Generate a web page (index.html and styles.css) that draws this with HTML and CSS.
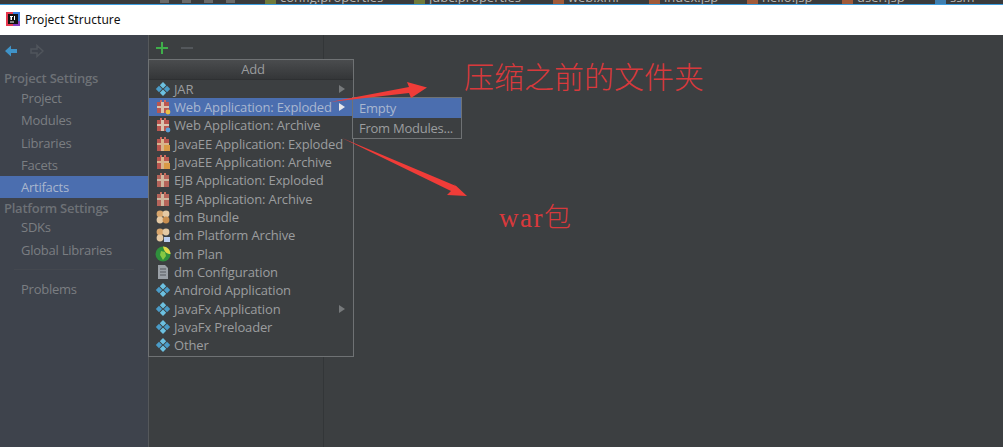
FILE: index.html
```html
<!DOCTYPE html>
<html lang="en">
<head>
    <meta charset="UTF-8">
    <meta name="viewport" content="width=device-width, initial-scale=1.0">
    <title>Project Structure</title>
    <link rel="stylesheet" href="styles.css">
</head>
<body>
    <svg width="0" height="0" class="defs">
        <defs>
            <symbol id="diamond" viewBox="0 0 16 16">
                <path d="M8 1l3.200 3.200L8 7.400 4.800 4.200z" fill="#6cc0e0"/>
                <path d="M4 4.800L7.200 8 4 11.200.8 8z" fill="#4a9cc8"/>
                <path d="M12 4.800L15.200 8 12 11.200 8.800 8z" fill="#4a9cc8"/>
                <path d="M8 8.600l3.200 3.200L8 15l-3.200-3.200z" fill="#6cc0e0"/>
            </symbol>
            <symbol id="gift" viewBox="0 0 16 16">
                <path d="M2 3h12v11H2z" fill="#d9c3ae"/>
                <path d="M2 3h4v4H2zM9 3h5v4H9zM2 9h4v5H2zM9 9h5v5H9z" fill="#b9564f"/>
                <path d="M5 1h2v2H5zM9 1h2v2H9z" fill="#cf6a5e"/>
                <circle cx="13" cy="13" r="2.400" fill="#e8c04a"/>
            </symbol>
            <symbol id="gift-blue" viewBox="0 0 16 16">
                <path d="M2 3h12v11H2z" fill="#d9c3ae"/>
                <path d="M2 3h4v4H2zM9 3h5v4H9zM2 9h4v5H2zM9 9h5v5H9z" fill="#b9564f"/>
                <path d="M5 1h2v2H5zM9 1h2v2H9z" fill="#cf6a5e"/>
                <circle cx="13" cy="13" r="2.400" fill="#5a9fd8"/>
            </symbol>
            <symbol id="gift-jar" viewBox="0 0 16 16">
                <path d="M2 3h12v12H2z" fill="#d8b48c"/>
                <path d="M2 3h4v4H2zM9 3h5v4H9zM2 9h4v6H2z" fill="#b9564f"/>
                <path d="M5 1h2v2H5zM9 1h2v2H9z" fill="#cf6a5e"/>
                <path d="M9 9h6v6H9z" fill="#d99a45"/>
            </symbol>
            <symbol id="gift-ejb" viewBox="0 0 16 16">
                <path d="M2 3h12v12H2z" fill="#cfb79f"/>
                <path d="M2 3h4v4H2zM9 3h5v4H9zM2 9h4v6H2zM9 9h5v6H9z" fill="#b5645a"/>
                <path d="M5 1h2v2H5zM9 1h2v2H9z" fill="#c9705f"/>
            </symbol>
            <symbol id="bundle" viewBox="0 0 16 16">
                <circle cx="5" cy="5" r="3.400" fill="#d8a66c"/>
                <circle cx="11" cy="5" r="3.400" fill="#e4c9a4"/>
                <circle cx="5" cy="11" r="3.400" fill="#e4c9a4"/>
                <circle cx="11" cy="11" r="3.400" fill="#c98f50"/>
            </symbol>
            <symbol id="bundle-lock" viewBox="0 0 16 16">
                <circle cx="5" cy="5" r="3.400" fill="#d8a66c"/>
                <circle cx="11" cy="5" r="3.400" fill="#e4c9a4"/>
                <circle cx="5" cy="11" r="3.400" fill="#e4c9a4"/>
                <path d="M9 10h6v5H9z" fill="#b9cdf0"/>
            </symbol>
            <symbol id="globe" viewBox="0 0 16 16">
                <circle cx="8" cy="8" r="7.500" fill="#2f8f3c"/>
                <path d="M8 .5C12 .5 15.500 4 15.500 8c-3 0-6-1-7.500-7.500z" fill="#e2d84a"/>
                <path d="M6 5l4 1 1 4-3 4-3-5z" fill="#86c843"/>
            </symbol>
            <symbol id="doc" viewBox="0 0 16 16">
                <path d="M3 1h7l3 3v11H3z" fill="#9aa0a6"/>
                <path d="M5 5h6M5 8h6M5 11h6" stroke="#55595e" stroke-width="1.200"/>
            </symbol>
        </defs>
    </svg>

    <div class="ide-strip">
        <span class="strip-tools"></span>
        <span class="strip-tab tab-config">config.properties</span>
        <span class="strip-tab tab-jdbc">jdbc.properties</span>
        <span class="strip-tab tab-web">web.xml</span>
        <span class="strip-tab tab-index">index.jsp</span>
        <span class="strip-tab tab-hello">hello.jsp</span>
        <span class="strip-tab tab-user">user.jsp</span>
        <span class="strip-tab tab-ssm">ssm</span>
    </div>

    <header class="titlebar">
        <svg class="app-logo" width="16" height="16" viewBox="0 0 16 16">
            <path d="M1 1h8v14H1z" fill="#e8384f"/>
            <path d="M8 1h7v9H8z" fill="#3b7de0"/>
            <path d="M8 10h7v5H8z" fill="#8a3fc0"/>
            <path d="M3 3h10v10H3z" fill="#111"/>
            <path d="M5 10.500h4v1H5z" fill="#fff"/>
            <path d="M5 5h3v1H7v3H5.500V6H5zM9 5h1v4H9z" fill="#fff"/>
        </svg>
        <span class="title-text">Project Structure</span>
    </header>

    <main class="window">
        <aside class="sidebar">
            <div class="nav-arrows">
                <svg width="14" height="14" viewBox="0 0 14 14"><path d="M1 7l6-5.500v3.500h6v4H7v3.500z" fill="#3f93c8"/></svg>
                <svg width="14" height="14" viewBox="0 0 14 14"><path d="M13 7L7 1.500v3.500H1v4h6v3.500z" fill="none" stroke="#50555c" stroke-width="1.500"/></svg>
            </div>
            <div class="nav-group">Project Settings</div>
            <div class="nav-item">Project</div>
            <div class="nav-item">Modules</div>
            <div class="nav-item">Libraries</div>
            <div class="nav-item">Facets</div>
            <div class="nav-item selected">Artifacts</div>
            <div class="nav-group group-platform">Platform Settings</div>
            <div class="nav-item">SDKs</div>
            <div class="nav-item">Global Libraries</div>
            <div class="nav-sep"></div>
            <div class="nav-item">Problems</div>
        </aside>

        <section class="artifacts">
            <div class="toolbar">
                <svg width="14" height="14" viewBox="0 0 14 14"><path d="M7 1v12M1 7h12" stroke="#3fae4a" stroke-width="2"/></svg>
                <svg width="14" height="14" viewBox="0 0 14 14"><path d="M1 7h12" stroke="#53575b" stroke-width="2"/></svg>
            </div>
        </section>

        <section class="content"></section>
    </main>

    <div class="popup add-menu">
        <div class="popup-head">Add</div>
        <div class="menu-row"><svg class="ico"><use href="#diamond"/></svg><span>JAR</span><i class="caret"></i></div>
        <div class="menu-row active"><svg class="ico"><use href="#gift"/></svg><span>Web Application: Exploded</span><i class="caret"></i></div>
        <div class="menu-row"><svg class="ico"><use href="#gift-blue"/></svg><span>Web Application: Archive</span></div>
        <div class="menu-row"><svg class="ico"><use href="#gift-jar"/></svg><span>JavaEE Application: Exploded</span></div>
        <div class="menu-row"><svg class="ico"><use href="#gift-jar"/></svg><span>JavaEE Application: Archive</span></div>
        <div class="menu-row"><svg class="ico"><use href="#gift-ejb"/></svg><span>EJB Application: Exploded</span></div>
        <div class="menu-row"><svg class="ico"><use href="#gift-ejb"/></svg><span>EJB Application: Archive</span></div>
        <div class="menu-row"><svg class="ico"><use href="#bundle"/></svg><span>dm Bundle</span></div>
        <div class="menu-row"><svg class="ico"><use href="#bundle-lock"/></svg><span>dm Platform Archive</span></div>
        <div class="menu-row"><svg class="ico"><use href="#globe"/></svg><span>dm Plan</span></div>
        <div class="menu-row"><svg class="ico"><use href="#doc"/></svg><span>dm Configuration</span></div>
        <div class="menu-row"><svg class="ico"><use href="#diamond"/></svg><span>Android Application</span></div>
        <div class="menu-row"><svg class="ico"><use href="#diamond"/></svg><span>JavaFx Application</span><i class="caret"></i></div>
        <div class="menu-row"><svg class="ico"><use href="#diamond"/></svg><span>JavaFx Preloader</span></div>
        <div class="menu-row"><svg class="ico"><use href="#diamond"/></svg><span>Other</span></div>
    </div>

    <div class="popup sub-menu">
        <div class="sub-row active">Empty</div>
        <div class="sub-row">From Modules...</div>
    </div>

    <svg class="arrows" width="1003" height="447" viewBox="0 0 1003 447">
        <path d="M330 102L409 87 407 82 427 87.500 411 98 409 93z" fill="#f03c38"/>
        <path d="M342 138L456 186 453 183 467 196 447 195 451 191z" fill="#f03c38"/>
    </svg>

    <div class="note note-folder">压缩之前的文件夹</div>
    <div class="note note-war">war包</div>
</body>
</html>
```

FILE: styles.css
```css
* {
    box-sizing: border-box;
}
html, body {
    height: 100%;
}
body {
    display: flex;
    flex-direction: column;
    margin: 0;
    overflow: hidden;
    background-color: #3c3f41;
    font-family: "Open Sans", "Noto Sans", sans-serif;
    font-size: 13px;
    color: #9b9d9f;
}
.defs {
    position: absolute;
}

/* piece of the IDE window behind the dialog */
.ide-strip {
    position: relative;
    flex: none;
    height: 5px;
    overflow: hidden;
    background-color: #3a3b3c;
    border-bottom: 1px solid #3d9ee0;
}
.strip-tools {
    position: absolute;
    left: 160px;
    top: 0;
    width: 82px;
    height: 3px;
    background: repeating-linear-gradient(90deg, #6a6a6a 0 9px, transparent 9px 22px);
}
.strip-tab {
    position: absolute;
    top: -12px;
    color: #b5b5b5;
    font-size: 13px;
}
.strip-tab::before {
    content: "";
    position: absolute;
    left: -15px;
    top: 10px;
    width: 11px;
    height: 6px;
    background-color: #a05a3a;
}
.tab-config { left: 280px; }
.tab-jdbc { left: 429px; }
.tab-web { left: 568px; }
.tab-index { left: 664px; }
.tab-hello { left: 762px; }
.tab-user { left: 857px; }
.tab-ssm { left: 950px; }
.tab-config::before, .tab-jdbc::before {
    background-color: #6f7a3c;
}
.tab-ssm::before {
    background-color: #3f7fb0;
}

.titlebar {
    flex: none;
    display: flex;
    align-items: center;
    gap: 4px;
    height: 30px;
    padding: 0 0 2px 5px;
    background-color: #fff;
    color: #111;
    font-family: "Noto Sans", sans-serif;
    font-size: 12px;
    letter-spacing: 0.05px;
}
.app-logo {
    flex: none;
}

.window {
    flex: 1;
    display: flex;
    min-height: 0;
}
.sidebar {
    flex: none;
    width: 149px;
    background-color: #3e434c;
    border-right: 1px solid #55585b;
    letter-spacing: -0.25px;
}
.nav-arrows {
    display: flex;
    gap: 12px;
    height: 33px;
    padding: 9px 0 0 4px;
}
.nav-group {
    height: 19px;
    line-height: 20px;
    padding-left: 4px;
    font-weight: 600;
    color: #6d7176;
}
.group-platform {
    height: 18px;
    line-height: 21px;
}
.nav-item {
    height: 22.300px;
    line-height: 22px;
    padding-left: 21px;
    color: #7b7e82;
}
.nav-item.selected {
    background-color: #4b6eaf;
    color: #a9b6cd;
}
.nav-sep {
    height: 17px;
    margin: 0 14px;
    border-bottom: 1px solid #44484f;
    transform: translateY(-8px);
}
.artifacts {
    flex: none;
    width: 175px;
    border-right: 1px solid #333638;
}
.toolbar {
    display: flex;
    gap: 11px;
    padding: 6px 0 0 6px;
}
.content {
    flex: 1;
}

/* popups lie over the panels */
.popup {
    position: absolute;
    border: 1px solid #6f7274;
    background-color: #3c3f41;
    letter-spacing: -0.15px;
}
.add-menu {
    left: 148px;
    top: 59px;
    width: 206px;
    height: 298px;
}
.popup-head {
    height: 19.500px;
    line-height: 18px;
    padding-left: 4px;
    text-align: center;
    background: linear-gradient(#4a4c4e, #343638);
    border-bottom: 1px solid #2e3032;
    color: #9a9c9e;
}
.menu-row {
    position: relative;
    display: flex;
    align-items: center;
    gap: 3px;
    height: 18.350px;
    padding-left: 6px;
    white-space: nowrap;
}
.menu-row.active {
    background-color: #4b6eaf;
    color: #a9b7d0;
}
.ico {
    flex: none;
    width: 16px;
    height: 16px;
}
.caret {
    position: absolute;
    right: 8px;
    top: 5px;
    border-left: 6px solid #76797b;
    border-top: 4px solid transparent;
    border-bottom: 4px solid transparent;
}
.menu-row.active .caret {
    border-left-color: #e6e8ec;
}
.sub-menu {
    left: 352px;
    top: 97px;
    width: 110px;
    height: 42px;
    letter-spacing: -0.25px;
}
.sub-row {
    height: 20px;
    line-height: 20px;
    padding-left: 6px;
}
.sub-row.active {
    background-color: #4b6eaf;
    color: #a9b7d0;
}

/* red notes drawn on the screenshot */
.arrows {
    position: absolute;
    left: 0;
    top: 0;
}
.note {
    position: absolute;
    color: #d8393c;
    font-family: "Liberation Serif", "Noto Sans CJK SC", serif;
    font-weight: 300;
    white-space: nowrap;
}
.note-folder {
    left: 464px;
    top: 58px;
    font-size: 30px;
    line-height: 40px;
}
.note-war {
    left: 499px;
    top: 200px;
    font-size: 27px;
    line-height: 36px;
    letter-spacing: 1.500px;
}
```
